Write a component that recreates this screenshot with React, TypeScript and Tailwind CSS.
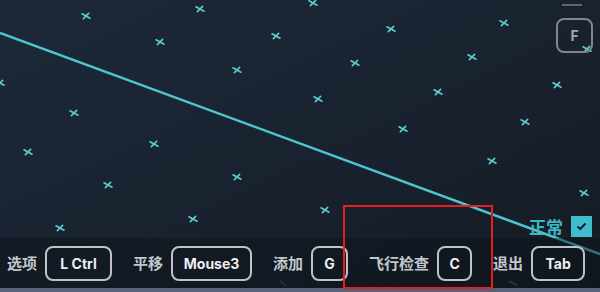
import React from "react";

const marks: [number, number][] = [
    [86, 16], [200, 9], [160, 42], [276, 36], [237, 70], [0, 83], [74, 113],
    [154, 144], [313, 3], [391, 29], [504, 23], [355, 63], [472, 57], [318, 99],
    [438, 92], [557, 85], [403, 129], [525, 122], [587, 49], [28, 152], [108, 185],
    [237, 177], [193, 219], [60, 228], [492, 161], [584, 193], [325, 210],
];

const keys = [
    { label: "选项", key: "L Ctrl", w: "w-[67px]" },
    { label: "平移", key: "Mouse3", w: "w-[81px]" },
    { label: "添加", key: "G", w: "w-[37px]" },
    { label: "飞行检查", key: "C", w: "w-[35px]" },
    { label: "退出", key: "Tab", w: "w-[54px]" },
];

const cjk = "font-['Noto_Sans_CJK_SC',sans-serif]";
const latin = "font-['Inter',sans-serif]";

function Canvas() {
    return (
        <svg className="absolute inset-0" width="600" height="292" viewBox="0 0 600 292">
            <line x1="0" y1="33" x2="600" y2="254" stroke="#4cc6d1" strokeWidth="2.4" />
            {marks.map(([x, y], i) => (
                <g key={i} transform={`translate(${x} ${y})`} stroke="#5ccbd0" strokeWidth="1.7" strokeLinecap="round">
                    <line x1="-4" y1="-2.2" x2="4" y2="2.2" />
                    <line x1="-2.6" y1="2.6" x2="2.6" y2="-2.6" />
                </g>
            ))}
            <g stroke="#3c7a80" strokeWidth="1.4" opacity="0.7">
                <line x1="509" y1="281" x2="517" y2="285" />
                <line x1="280" y1="281" x2="286" y2="286" />
            </g>
        </svg>
    );
}

export default function App() {
    return (
        <div className="relative w-[600px] h-[292px] overflow-hidden bg-gradient-to-br from-[#1d2939] via-[#19222f] to-[#141b24]">
            <Canvas />
            <div className="relative flex flex-col h-full">
                <div className="flex flex-col items-end pr-[7px] pt-[4px] gap-[12px]">
                    <div className="w-[20px] h-[2px] bg-[#5e656e] mr-[11px]" />
                    <div className={`${latin} w-[37px] h-[35px] rounded-[8px] border-2 border-[#80868e] flex items-center justify-center text-[14px] font-bold text-[#a2a7ad]`}>
                        F
                    </div>
                </div>
                <div className="flex-1" />
                <div className="flex items-center justify-end gap-[8px] pr-[8px] pb-[1px]">
                    <span className={`${cjk} text-[17px] leading-[17px] font-bold text-[#3db7c6]`}>正常</span>
                    <div className="w-[21px] h-[21px] bg-[#3fbdcc] flex items-center justify-center">
                        <svg width="11" height="9" viewBox="0 0 11 9">
                            <path d="M1.5 4.5 L4.2 7 L9.5 1.5" fill="none" stroke="#13202b" strokeWidth="2" />
                        </svg>
                    </div>
                </div>
                <div className="h-[50px] bg-[#0b1118]/45 flex items-center pl-[7px] gap-[21px]">
                    {keys.map((k) => (
                        <div key={k.key} className="flex items-center gap-[8px]">
                            <span className={`${cjk} text-[15px] font-bold text-[#c3c7cc]`}>{k.label}</span>
                            <div className={`${latin} ${k.w} h-[35px] rounded-[8px] border-2 border-[#bfc3c8] flex items-center justify-center text-[14px] font-bold text-[#eceef0]`}>
                                {k.key}
                            </div>
                        </div>
                    ))}
                </div>
                <div className="h-[4px] bg-[#56637a]" />
            </div>
            <div className="absolute left-[343px] top-[205px] w-[150px] h-[84px] border-2 border-[#e5201c]" />
        </div>
    );
}
